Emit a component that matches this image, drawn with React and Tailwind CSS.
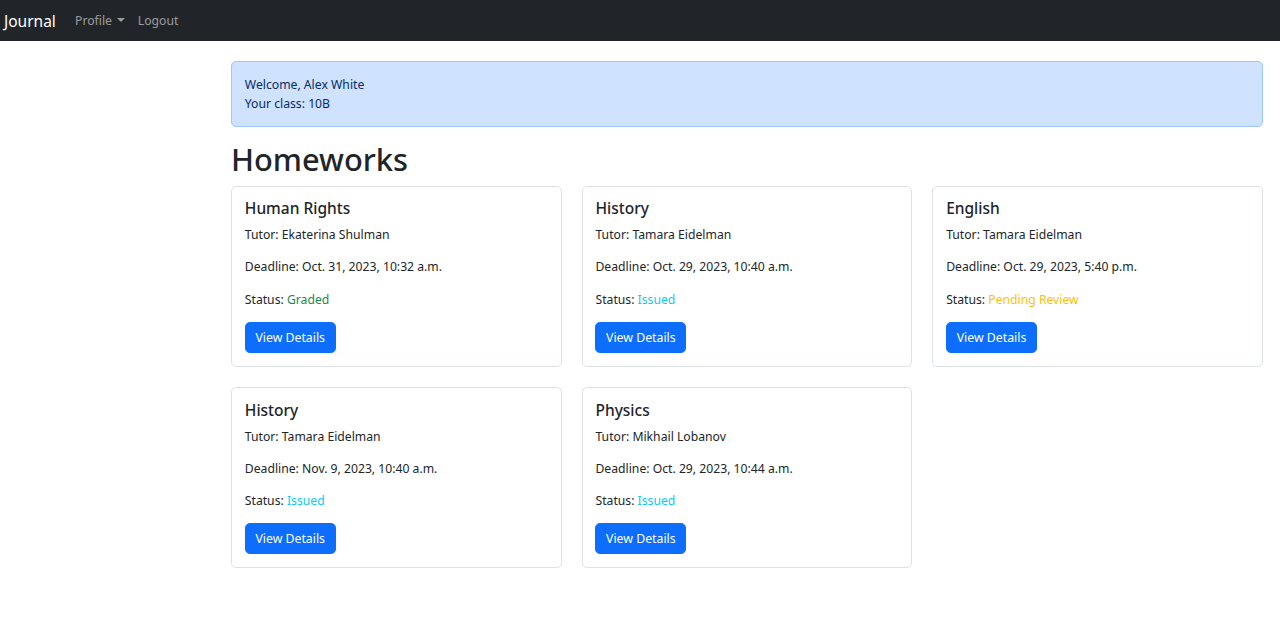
const homeworks = [
  { subject: 'Human Rights', tutor: 'Ekaterina Shulman', deadline: 'Oct. 31, 2023, 10:32 a.m.', status: 'Graded' },
  { subject: 'History', tutor: 'Tamara Eidelman', deadline: 'Oct. 29, 2023, 10:40 a.m.', status: 'Issued' },
  { subject: 'English', tutor: 'Tamara Eidelman', deadline: 'Oct. 29, 2023, 5:40 p.m.', status: 'Pending Review' },
  { subject: 'History', tutor: 'Tamara Eidelman', deadline: 'Nov. 9, 2023, 10:40 a.m.', status: 'Issued' },
  { subject: 'Physics', tutor: 'Mikhail Lobanov', deadline: 'Oct. 29, 2023, 10:44 a.m.', status: 'Issued' },
];

const statusColor = {
  Graded: 'text-[#198754]',
  Issued: 'text-[#0dcaf0]',
  'Pending Review': 'text-[#ffc107]',
};

const HomeworkCard = ({ hw }) => (
  <div className="rounded-[5px] border border-[#dee2e6] bg-white p-[12.8px]">
    <h5 className="mb-[6.4px] text-[15.5px] font-medium leading-[19.6px]">{hw.subject}</h5>
    <p className="mb-[13px]">Tutor: {hw.tutor}</p>
    <p className="mb-[13px]">Deadline: {hw.deadline}</p>
    <p className="mb-[13px]">
      Status: <span className={statusColor[hw.status]}>{hw.status}</span>
    </p>
    <button className="rounded-[4.8px] border border-[#0d6efd] bg-[#0d6efd] px-[9.6px] py-[5px] text-[12.3px] leading-[19.2px] text-white">
      View Details
    </button>
  </div>
);

const App = () => {
  return (
    <div className="min-h-screen bg-white font-['Noto_Sans',sans-serif] text-[12.2px] leading-[19.2px] text-[#212529]">
      {/* Navbar */}
      <nav className="flex h-[41px] items-center bg-[#212529] pl-[4px]">
        <a className="mr-[12.8px] text-[15.5px] leading-[24px] text-white">Journal</a>
        <div className="flex items-center">
          <a className="flex items-center px-[6.4px] text-[rgba(255,255,255,0.55)]">
            Profile
            <span className="ml-[5px] inline-block h-0 w-0 border-x-[4px] border-t-[4px] border-x-transparent border-t-[rgba(255,255,255,0.55)]"></span>
          </a>
          <a className="px-[6.4px] text-[rgba(255,255,255,0.55)]">Logout</a>
        </div>
      </nav>

      <main className="ml-[231px] mr-[17px] pt-[20px]">
        <div className="mb-[13px] rounded-[5px] border border-[#9ec5fe] bg-[#cfe2ff] p-[12.8px] text-[#052c65]">
          <div>Welcome, Alex White</div>
          <div>Your class: 10B</div>
        </div>

        <h1 className="mb-[6.5px] text-[30.8px] font-medium leading-[39px]">Homeworks</h1>

        <div className="grid grid-cols-3 gap-x-[20px] gap-y-[20px]">
          {homeworks.map((hw, i) => (
            <HomeworkCard key={i} hw={hw} />
          ))}
        </div>
      </main>
    </div>
  );
};

export default App;
